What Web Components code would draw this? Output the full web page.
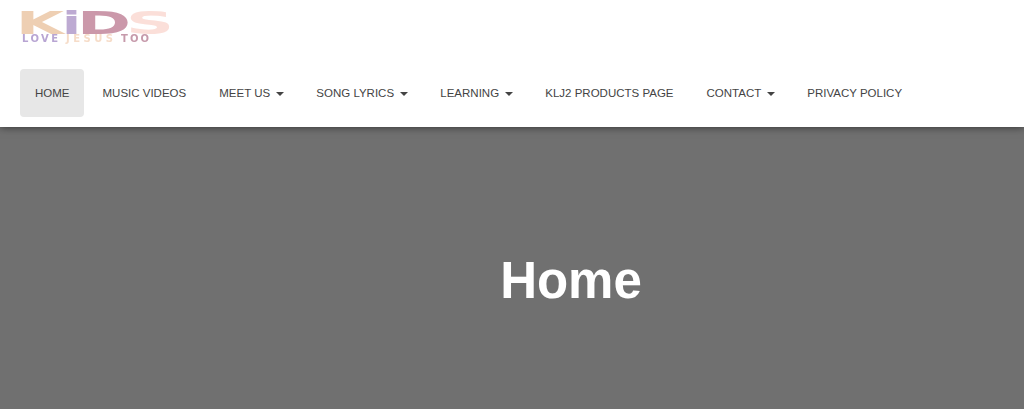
<!DOCTYPE html>
<html>
<head>
<meta charset="utf-8">
<title>Home</title>
<style>
    html, body { margin: 0; height: 100%; }
    body {
        font-family: "Liberation Sans", Arial, sans-serif;
        background: #707070;
        overflow: hidden;
    }
</style>
</head>
<body>
<site-header>
    <site-logo slot="logo"></site-logo>
    <nav-item active>HOME</nav-item>
    <nav-item>MUSIC VIDEOS</nav-item>
    <nav-item caret>MEET US</nav-item>
    <nav-item caret>SONG LYRICS</nav-item>
    <nav-item caret>LEARNING</nav-item>
    <nav-item>KLJ2 PRODUCTS PAGE</nav-item>
    <nav-item caret>CONTACT</nav-item>
    <nav-item>PRIVACY POLICY</nav-item>
</site-header>
<page-banner>Home</page-banner>

<script>
    class SiteLogo extends HTMLElement {
        constructor() {
            super();
            this.attachShadow({mode: 'open'}).innerHTML = `
                <style>
                    :host { display: block; width: 170px; height: 44px; margin-left: -8px; }
                    svg { display: block; filter: blur(.6px); }
                    .big { font: bold 32px "DejaVu Sans", sans-serif; }
                    .small { font: bold 10px "DejaVu Sans", sans-serif; }
                </style>
                <svg width="170" height="44" viewBox="0 0 170 44">
                    <text class="big" x="4" y="30" fill="#eecfb3" textLength="48" lengthAdjust="spacingAndGlyphs">K</text>
                    <text class="big" x="50" y="30" fill="#bdaad2" textLength="19" lengthAdjust="spacingAndGlyphs">i</text>
                    <text class="big" x="65" y="30" fill="#cb98aa" textLength="54" lengthAdjust="spacingAndGlyphs">D</text>
                    <text class="big" x="114" y="30" fill="#fbdfd9" textLength="48" lengthAdjust="spacingAndGlyphs">S</text>
                    <text class="small" x="10" y="38" fill="#b8a5d3" textLength="36">LOVE</text>
                    <text class="small" x="54" y="38" fill="#f6dcc8" textLength="47">JESUS</text>
                    <text class="small" x="109" y="38" fill="#c69aab" textLength="28">TOO</text>
                </svg>`;
        }
    }
    customElements.define('site-logo', SiteLogo);

    class NavItem extends HTMLElement {
        constructor() {
            super();
            this.attachShadow({mode: 'open'}).innerHTML = `
                <style>
                    :host {
                        display: block;
                        padding: 15px;
                        font-size: 11.5px;
                        line-height: 18px;
                        color: #444;
                        border-radius: 4px;
                        white-space: nowrap;
                        cursor: pointer;
                    }
                    :host([active]) {
                        background: #e7e7e7;
                        padding-right: 14px;
                        margin-right: 1px;
                    }
                    .caret {
                        display: none;
                        width: 0;
                        height: 0;
                        margin-left: 3px;
                        margin-right: -1px;
                        vertical-align: middle;
                        border-top: 4px solid #444;
                        border-left: 4px solid transparent;
                        border-right: 4px solid transparent;
                    }
                    :host([caret]) .caret { display: inline-block; }
                </style>
                <slot></slot> <span class="caret"></span>`;
        }
    }
    customElements.define('nav-item', NavItem);

    class SiteHeader extends HTMLElement {
        constructor() {
            super();
            this.attachShadow({mode: 'open'}).innerHTML = `
                <style>
                    :host {
                        display: block;
                        position: relative;
                        height: 127px;
                        box-sizing: border-box;
                        padding: 4px 20px 0;
                        background: #fff;
                        box-shadow: 0 0 8px rgba(0,0,0,.6);
                    }
                    nav {
                        display: flex;
                        gap: 3px;
                        margin-top: 21px;
                    }
                </style>
                <slot name="logo"></slot>
                <nav><slot></slot></nav>`;
        }
    }
    customElements.define('site-header', SiteHeader);

    class PageBanner extends HTMLElement {
        constructor() {
            super();
            this.attachShadow({mode: 'open'}).innerHTML = `
                <style>
                    :host {
                        display: block;
                        padding: 125px 0 0 118px;
                        text-align: center;
                        color: #fff;
                    }
                    h1 {
                        margin: 0;
                        font-size: 51px;
                        font-weight: bold;
                        line-height: 58px;
                    }
                </style>
                <h1><slot></slot></h1>`;
        }
    }
    customElements.define('page-banner', PageBanner);
</script>
</body>
</html>
